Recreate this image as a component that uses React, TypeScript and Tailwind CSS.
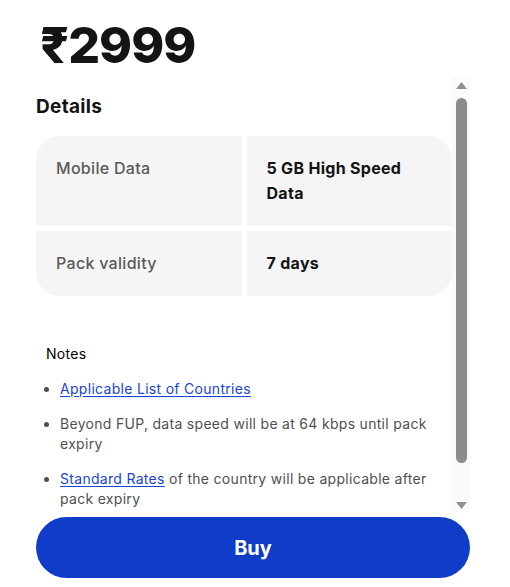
import React from 'react';

const rows = [
    { label: 'Mobile Data', value: '5 GB High Speed Data' },
    { label: 'Pack validity', value: '7 days' },
];

const ScrollTrack: React.FC = () => (
    <div className="w-[18px] h-[435px] bg-[#fafafa] flex flex-col items-center shrink-0">
        <svg className="mt-[5px]" width="11" height="7" viewBox="0 0 11 7">
            <path d="M5.5 0 L11 7 L0 7 Z" fill="#8f8f8f" />
        </svg>
        <div className="mt-[9px] w-[11px] h-[365px] rounded-full bg-[#8c8c8c]" />
        <svg className="mt-[39px]" width="11" height="7" viewBox="0 0 11 7">
            <path d="M0 0 L11 0 L5.5 7 Z" fill="#8f8f8f" />
        </svg>
    </div>
);

const App: React.FC = () => {
    return (
        <div className="w-[510px] h-[587px] bg-white font-['Inter',sans-serif] text-[#141414] overflow-hidden">
            <div className="pl-10 pt-5 h-[77px]">
                <h1 className="text-[50px] leading-[50px] font-extrabold tracking-[-1px]">₹2999</h1>
            </div>

            <div className="ml-9 w-[434px] flex">
                <div className="w-[416px] h-[435px] overflow-hidden">
                    <div className="pt-[18px] pb-[60px] tracking-[0.3px]">
                        <h2 className="text-[19px] leading-6 font-bold mb-[17px]">Details</h2>

                        <div className="grid grid-cols-2 gap-[5px] rounded-3xl overflow-hidden">
                            {rows.map((row) => (
                                <React.Fragment key={row.label}>
                                    <div className="bg-[#f5f5f5] p-5 text-base leading-[25px] font-medium text-[#595959]">
                                        {row.label}
                                    </div>
                                    <div className="bg-[#f5f5f5] p-5 text-base leading-[25px] font-bold text-[#141414]">
                                        {row.value}
                                    </div>
                                </React.Fragment>
                            ))}
                        </div>

                        <div className="mt-12 pl-[10px] text-sm leading-5">
                            <p className="text-black">Notes</p>
                            <ul className="list-disc pl-[14px] mt-[15px] flex flex-col gap-[15px] text-[#505050] marker:text-[#505050]">
                                <li>
                                    <a href="#" className="text-[#1a44d4] underline underline-offset-2">Applicable List of Countries</a>
                                </li>
                                <li>Beyond FUP, data speed will be at 64 kbps until pack expiry</li>
                                <li>
                                    <a href="#" className="text-[#1a44d4] underline underline-offset-2">Standard Rates</a> of the country will be applicable after pack expiry
                                </li>
                            </ul>
                        </div>
                    </div>
                </div>
                <ScrollTrack />
            </div>

            <div className="ml-9 mt-[5px] w-[434px]">
                <button className="w-full h-[61px] rounded-full bg-[#0f3cc9] text-white text-xl font-bold">
                    Buy
                </button>
            </div>
        </div>
    );
};

export default App;
